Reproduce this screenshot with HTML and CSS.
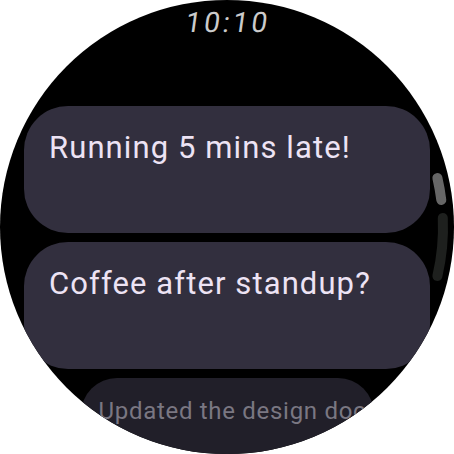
FILE: index.html
```html
<!DOCTYPE html>
<html>
<head>
<meta charset="utf-8">
<link rel="stylesheet" href="styles.css">
</head>
<body>
<div class="watch">
  <div class="time">10:10</div>
  <div class="list">
    <div class="card"><span class="msg">Running 5 mins late!</span></div>
    <div class="card"><span class="msg">Coffee after standup?</span></div>
    <div class="card card-far"><span class="msg">Updated the design doc</span></div>
  </div>
  <svg class="scrollbar" width="454" height="454" viewBox="0 0 454 454">
    <path class="track" d="M442.8 218 A216 216 0 0 1 437.4 276"/>
    <path class="thumb" d="M437.4 178 A216 216 0 0 1 441.3 200"/>
  </svg>
</div>
</body>
</html>
```
FILE: styles.css
```css
html, body {
  margin: 0;
  padding: 0;
  background: #ffffff;
}
.watch {
  position: relative;
  width: 454px;
  height: 454px;
  border-radius: 50%;
  background: #000000;
  overflow: hidden;
  font-family: Roboto, "Liberation Sans", sans-serif;
}
.time {
  padding-top: 6px;
  height: 33px;
  line-height: 33px;
  font-size: 28px;
  letter-spacing: 3px;
  text-indent: 3px;
  color: #cbcbcb;
  text-align: center;
  transform: skewX(-8deg);
}
.list {
  margin-top: 67px;
  display: flex;
  flex-direction: column;
  gap: 9px;
  padding: 0 24px;
}
.card {
  height: 127px;
  box-sizing: border-box;
  background: #322f3e;
  border-radius: 44px;
  padding: 24px 20px 0 25px;
  color: #ede3f4;
  font-size: 31px;
  line-height: 36px;
  letter-spacing: 1.1px;
}
.card-far {
  width: 293px;
  align-self: center;
  background: #211f29;
  color: #7a7782;
  font-size: 24px;
  line-height: 28px;
  letter-spacing: 0.7px;
  padding: 19px 0 0 18px;
  border-radius: 36px;
  white-space: nowrap;
  overflow: hidden;
}
.scrollbar {
  position: absolute;
  left: 0;
  top: 0;
}
.scrollbar path {
  fill: none;
  stroke-width: 10;
  stroke-linecap: round;
}
.track {
  stroke: #1e201e;
}
.thumb {
  stroke: #666666;
}
```
